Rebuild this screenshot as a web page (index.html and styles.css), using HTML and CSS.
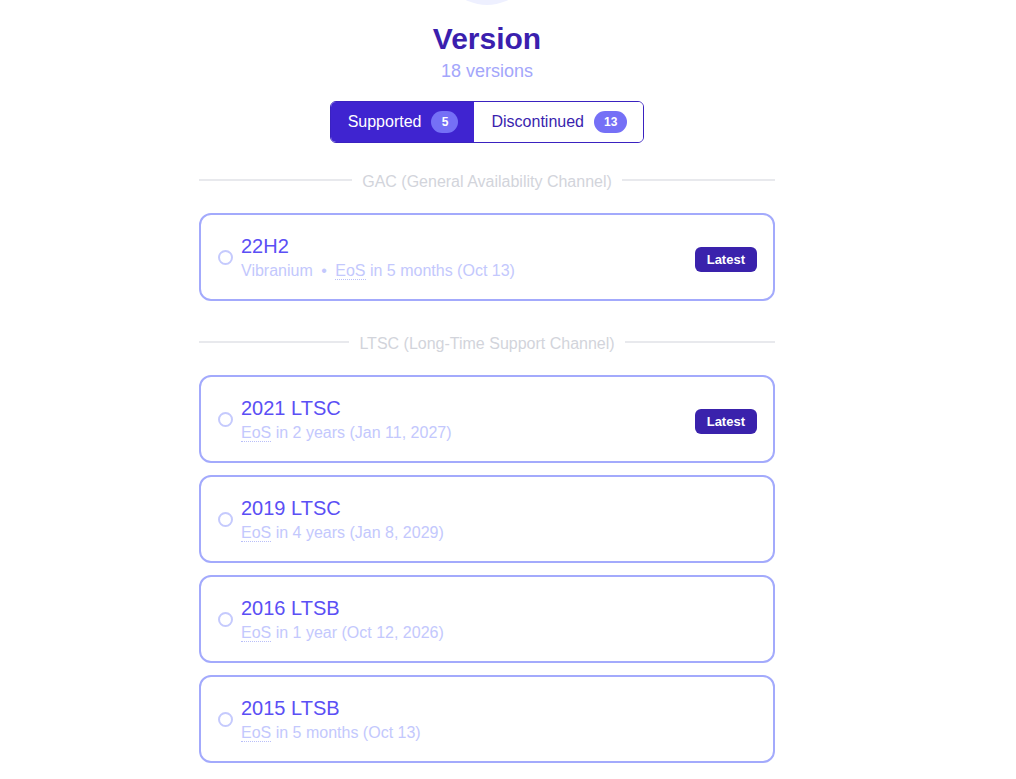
FILE: index.html
```html
<!DOCTYPE html>
<html lang="en">
<head>
<meta charset="utf-8">
<title>Version</title>
<link rel="stylesheet" href="styles.css">
</head>
<body>
<main class="page">
  <div class="hero-icon"></div>
  <h1 class="title">Version</h1>
  <p class="count">18 versions</p>

  <div class="tabs">
    <button class="tab tab-active">Supported <span class="badge">5</span></button>
    <button class="tab">Discontinued <span class="badge">13</span></button>
  </div>

  <div class="divider"><span>GAC (General Availability Channel)</span></div>

  <div class="list">
    <label class="card">
      <span class="radio"></span>
      <span class="info">
        <span class="name">22H2</span>
        <span class="meta">Vibranium <span class="dot">•</span> <abbr class="eos">EoS</abbr> in 5 months (Oct 13)</span>
      </span>
      <span class="latest">Latest</span>
    </label>
  </div>

  <div class="divider divider-2"><span>LTSC (Long-Time Support Channel)</span></div>

  <div class="list">
    <label class="card">
      <span class="radio"></span>
      <span class="info">
        <span class="name">2021 LTSC</span>
        <span class="meta"><abbr class="eos">EoS</abbr> in 2 years (Jan 11, 2027)</span>
      </span>
      <span class="latest">Latest</span>
    </label>
    <label class="card">
      <span class="radio"></span>
      <span class="info">
        <span class="name">2019 LTSC</span>
        <span class="meta"><abbr class="eos">EoS</abbr> in 4 years (Jan 8, 2029)</span>
      </span>
    </label>
    <label class="card">
      <span class="radio"></span>
      <span class="info">
        <span class="name">2016 LTSB</span>
        <span class="meta"><abbr class="eos">EoS</abbr> in 1 year (Oct 12, 2026)</span>
      </span>
    </label>
    <label class="card">
      <span class="radio"></span>
      <span class="info">
        <span class="name">2015 LTSB</span>
        <span class="meta"><abbr class="eos">EoS</abbr> in 5 months (Oct 13)</span>
      </span>
    </label>
  </div>
</main>
</body>
</html>
```

FILE: styles.css
```css
* { box-sizing: border-box; }

html, body {
  margin: 0;
  padding: 0;
  background: #ffffff;
  font-family: "Liberation Sans", Arial, sans-serif;
}

.page {
  width: 576px;
  margin-left: 199px;
  display: flex;
  flex-direction: column;
  align-items: center;
}

.hero-icon {
  width: 96px;
  height: 96px;
  border-radius: 50%;
  background: #eef0ff;
  margin-top: -91px;
}

.title {
  margin: 16px 0 0;
  font-size: 30px;
  line-height: 36px;
  font-weight: 700;
  color: #3b1fae;
}

.count {
  margin: 2px 0 0;
  font-size: 18px;
  line-height: 24px;
  color: #a3a6fb;
}

.tabs {
  margin-top: 18px;
  display: flex;
  border: 1px solid #3a22c0;
  border-radius: 6px;
  overflow: hidden;
  height: 42px;
}

.tab {
  font-family: inherit;
  font-size: 16px;
  border: 0;
  background: #ffffff;
  color: #3a1fae;
  display: flex;
  align-items: center;
  gap: 10px;
  padding: 0 16px 0 17px;
  cursor: pointer;
}

.tab-active {
  background: #3f24d0;
  color: #ffffff;
}

.badge {
  display: inline-flex;
  align-items: center;
  justify-content: center;
  min-width: 27px;
  height: 22px;
  padding: 0 10px;
  border-radius: 11px;
  background: #7570f6;
  color: #ffffff;
  font-size: 12px;
  font-weight: 700;
}

.divider {
  width: 100%;
  margin-top: 27px;
  display: flex;
  align-items: center;
  gap: 10px;
  color: #d2d4db;
  font-size: 16px;
  line-height: 24px;
}

.divider::before,
.divider::after {
  content: "";
  flex: 1;
  height: 2px;
  margin-top: -4px;
  background: #e8e9ed;
}

.divider-2 {
  margin-top: 31px;
}

.list {
  width: 100%;
  margin-top: 19px;
  display: flex;
  flex-direction: column;
  gap: 12px;
}

.card {
  display: flex;
  align-items: center;
  height: 88px;
  border: 2px solid #a3aafc;
  border-radius: 12px;
  padding: 0 16px 0 17px;
  cursor: pointer;
}

.radio {
  width: 15px;
  height: 15px;
  border: 2px solid #c5cafd;
  border-radius: 50%;
  flex: none;
  margin-right: 8px;
}

.info {
  flex: 1;
  display: flex;
  flex-direction: column;
}

.name {
  font-size: 20px;
  line-height: 28px;
  color: #5b4ff5;
}

.meta {
  font-size: 16px;
  line-height: 22px;
  color: #c3c8fd;
}

.dot {
  margin: 0 4px;
}

.eos {
  text-decoration: none;
  border-bottom: 1px dotted #b9bff9;
}

.latest {
  background: #3a22ac;
  color: #ffffff;
  font-size: 13px;
  font-weight: 700;
  line-height: 25px;
  height: 25px;
  padding: 0 12px;
  border-radius: 6px;
  margin-top: 5px;
}
```
